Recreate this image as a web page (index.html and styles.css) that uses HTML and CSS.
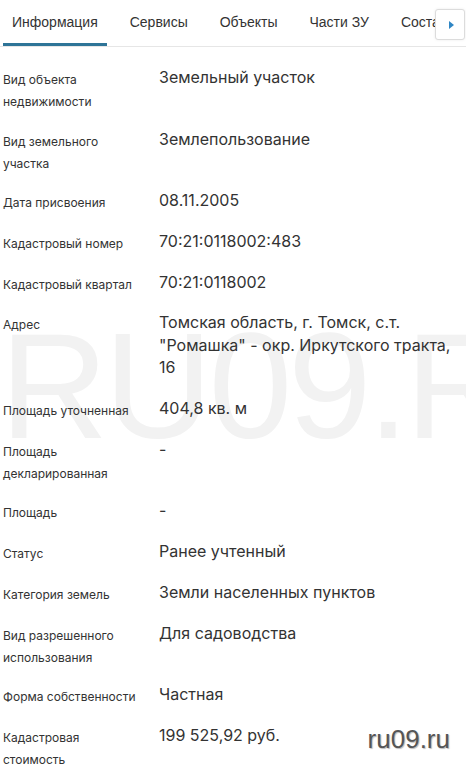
FILE: index.html
```html
<!DOCTYPE html>
<html lang="ru">
<head>
    <meta charset="UTF-8">
    <meta name="viewport" content="width=device-width, initial-scale=1.0">
    <title>Информация об объекте</title>
    <link rel="stylesheet" href="styles.css">
</head>
<body>
    <div class="page">
        <div class="tabs-wrap">
            <div class="tabs">
                <div class="tab active">Информация</div>
                <div class="tab">Сервисы</div>
                <div class="tab">Объекты</div>
                <div class="tab">Части ЗУ</div>
                <div class="tab">Состав</div>
            </div>
            <button class="tabs-next" aria-label="Далее"><span class="arrow"></span></button>
        </div>

        <div class="watermark">RU09.RU</div>

        <div class="info">
            <div class="row">
                <div class="label">Вид объекта недвижимости</div>
                <div class="value">Земельный участок</div>
            </div>
            <div class="row">
                <div class="label">Вид земельного участка</div>
                <div class="value">Землепользование</div>
            </div>
            <div class="row">
                <div class="label">Дата присвоения</div>
                <div class="value">08.11.2005</div>
            </div>
            <div class="row">
                <div class="label">Кадастровый номер</div>
                <div class="value">70:21:0118002:483</div>
            </div>
            <div class="row">
                <div class="label">Кадастровый квартал</div>
                <div class="value">70:21:0118002</div>
            </div>
            <div class="row">
                <div class="label">Адрес</div>
                <div class="value">Томская область, г. Томск, с.т. "Ромашка" - окр. Иркутского тракта, 16</div>
            </div>
            <div class="row">
                <div class="label">Площадь уточненная</div>
                <div class="value">404,8 кв. м</div>
            </div>
            <div class="row">
                <div class="label">Площадь декларированная</div>
                <div class="value">-</div>
            </div>
            <div class="row">
                <div class="label">Площадь</div>
                <div class="value">-</div>
            </div>
            <div class="row">
                <div class="label">Статус</div>
                <div class="value">Ранее учтенный</div>
            </div>
            <div class="row">
                <div class="label">Категория земель</div>
                <div class="value">Земли населенных пунктов</div>
            </div>
            <div class="row">
                <div class="label">Вид разрешенного использования</div>
                <div class="value">Для садоводства</div>
            </div>
            <div class="row">
                <div class="label">Форма собственности</div>
                <div class="value">Частная</div>
            </div>
            <div class="row">
                <div class="label">Кадастровая стоимость</div>
                <div class="value">199 525,92 руб.</div>
            </div>
        </div>

        <div class="site-mark">ru09.ru</div>
    </div>
</body>
</html>
```

FILE: styles.css
```css
body {
    margin: 0;
    background: #fff;
    color: #333;
    font-family: Inter, "Noto Sans", sans-serif;
}
.page {
    position: relative;
    height: 769px;
    overflow: hidden;
}
.tabs-wrap {
    position: relative;
    border-bottom: 1px solid #e6e6e6;
    padding-left: 3px;
}
.tabs {
    display: flex;
    gap: 14px;
    overflow: hidden;
    white-space: nowrap;
}
.tab {
    font-family: "Liberation Sans", Arial, sans-serif;
    font-size: 14px;
    color: #333;
    padding: 13px 9px 12px;
    line-height: 18px;
    border-bottom: 3px solid transparent;
}
.tab.active {
    border-bottom-color: #2e7497;
}
.tabs-next {
    position: absolute;
    top: 9px;
    right: 1px;
    width: 30px;
    height: 31px;
    padding: 0;
    background: #fff;
    border: 1px solid #dcdcdc;
    border-radius: 3px;
    box-shadow: 0 0 3px rgba(0,0,0,0.08);
    display: flex;
    align-items: center;
    justify-content: center;
}
.arrow {
    width: 0;
    height: 0;
    border-top: 4px solid transparent;
    border-bottom: 4px solid transparent;
    border-left: 5px solid #2f86c4;
    margin-left: 2px;
}
.watermark {
    position: absolute;
    top: 311px;
    left: 0;
    font-family: "Liberation Sans", Arial, sans-serif;
    font-size: 150px;
    line-height: 1;
    letter-spacing: -4px;
    color: #f2f2f2;
    white-space: nowrap;
    z-index: 0;
}
.info {
    position: relative;
    z-index: 1;
    padding: 19px 3px 0;
}
.row {
    display: grid;
    grid-template-columns: 138px 1fr;
    column-gap: 18px;
    padding-bottom: 14.5px;
}
.label {
    font-size: 12px;
    line-height: 22px;
    padding-top: 3px;
    color: #333;
}
.value {
    font-size: 16px;
    line-height: 22.5px;
    padding-bottom: 3.75px;
    color: #333;
}
.site-mark {
    position: absolute;
    right: 16px;
    top: 724px;
    z-index: 2;
    font-family: "Liberation Sans", Arial, sans-serif;
    font-size: 26px;
    color: #555;
    text-shadow: 1px 1px 1px #bbb, -1px -1px 0 #fff;
}
```
